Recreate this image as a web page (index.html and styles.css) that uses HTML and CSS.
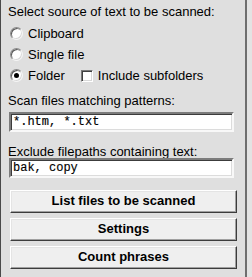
FILE: index.html
```html
<!DOCTYPE html>
<html>
<head>
<meta charset="utf-8">
<link rel="stylesheet" href="styles.css">
</head>
<body>
<div class="panel">
  <div class="label first">Select source of text to be scanned:</div>
  <div class="row"><span class="radio"></span><span>Clipboard</span></div>
  <div class="row"><span class="radio"></span><span>Single file</span></div>
  <div class="row"><span class="radio checked"></span><span>Folder</span><span class="check"></span><span>Include subfolders</span></div>
  <div class="label scan">Scan files matching patterns:</div>
  <div class="input in1">*.htm, *.txt</div>
  <div class="label excl">Exclude filepaths containing text:</div>
  <div class="input in2">bak, copy</div>
  <div class="buttons">
    <div class="btn">List files to be scanned</div>
    <div class="btn">Settings</div>
    <div class="btn">Count phrases</div>
  </div>
</div>
</body>
</html>
```
FILE: styles.css
```css
html, body { margin: 0; padding: 0; }
body {
  width: 252px; height: 277px; overflow: hidden;
  background: #e3e3e3;
  font-family: "Liberation Sans", Arial, sans-serif;
  font-size: 13px; color: #000;
}
.panel {
  box-sizing: border-box;
  width: 247px; height: 277px;
  background: #dfdfdf;
  border-left: 1px solid #4a4a4a;
  border-right: 2px solid #6e6e6e;
  padding: 4px 0 0 7px;
  display: flex; flex-direction: column;
}
.label { line-height: 15px; height: 15px; }
.label.first { margin-bottom: 4px; }
.label.scan { margin-top: 7px; }
.label.excl { margin-top: 12px; }
.row {
  display: flex; align-items: center; height: 21px;
  line-height: 15px;
}
.radio {
  box-sizing: border-box;
  width: 13px; height: 13px; border-radius: 50%;
  background: #fff;
  border: 1px solid;
  border-color: #8a8a8a #f4f4f4 #f4f4f4 #8a8a8a;
  box-shadow: inset 1px 1px 0 #5a5a5a, inset -1px -1px 0 #d8d8d8;
  margin: 0 5px 0 2px;
  position: relative;
}
.radio.checked::after {
  content: ""; position: absolute; left: 3px; top: 3px;
  width: 5px; height: 5px; border-radius: 50%; background: #000;
}
.check {
  box-sizing: border-box;
  width: 12px; height: 12px; background: #fff;
  border: 1px solid; border-color: #7a7a7a #fff #fff #7a7a7a;
  box-shadow: inset 1px 1px 0 #404040, inset -1px -1px 0 #d8d8d8;
  margin: 0 5px 0 16px;
}
.input {
  box-sizing: border-box;
  width: 225px; height: 20px;
  margin-left: 1px;
  background: #fff;
  border: 2px solid; border-color: #7c7c7c #f8f8f8 #f8f8f8 #7c7c7c;
  box-shadow: inset 1px 1px 0 #3c3c3c, inset -1px -1px 0 #dcdcdc;
  font-family: "Liberation Mono", "Courier New", monospace;
  font-size: 12px; line-height: 16px;
  padding-left: 2px;
  -webkit-text-stroke: 0.15px #000;
}
.input.in1 { margin-top: 4px; }
.input.in2 { margin-top: -1px; }
.buttons {
  display: flex; flex-direction: column; gap: 5px;
  margin: 12px 0 0 2px;
}
.btn {
  box-sizing: border-box;
  width: 227px; height: 23px;
  background: #efefef;
  border: 1px solid; border-color: #fff #3c3c3c #3c3c3c #fff;
  box-shadow: inset -1px -1px 0 #a0a0a0, inset 1px 1px 0 #e4e4e4;
  text-align: center; font-weight: bold; line-height: 20px;
}
```
